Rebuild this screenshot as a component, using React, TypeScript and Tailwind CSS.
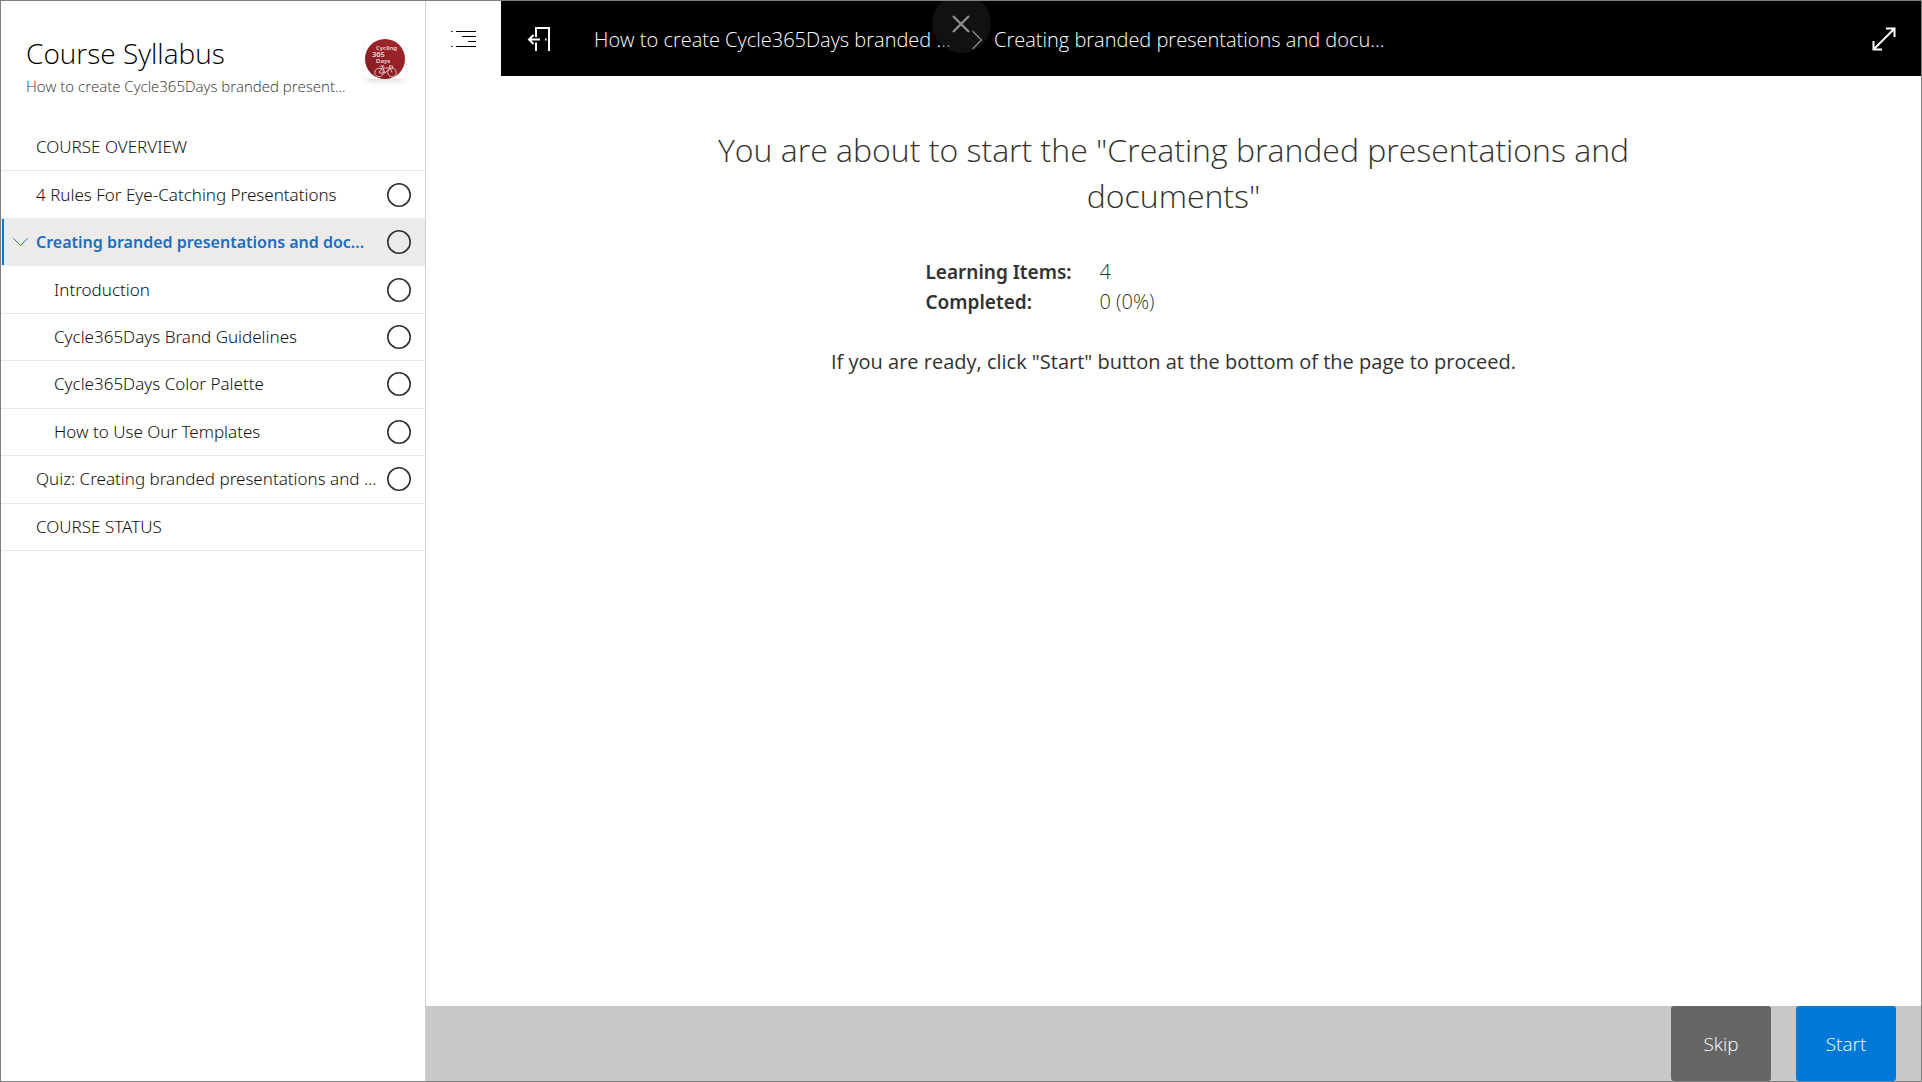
import { useState } from "react";

const items = [
  { title: "COURSE OVERVIEW", kind: "section" },
  { title: "4 Rules For Eye-Catching Presentations", kind: "item" },
  { title: "Creating branded presentations and doc...", kind: "active" },
  { title: "Introduction", kind: "child" },
  { title: "Cycle365Days Brand Guidelines", kind: "child" },
  { title: "Cycle365Days Color Palette", kind: "child" },
  { title: "How to Use Our Templates", kind: "child" },
  { title: "Quiz: Creating branded presentations and ...", kind: "item" },
  { title: "COURSE STATUS", kind: "section" },
];

const CourseLogo = () => (
  <svg viewBox="0 0 40 40" className="size-10 shrink-0 rounded bg-white shadow-md" role="img" aria-label="Cycling 365 Days">
    <defs>
      <linearGradient id="badge" x1="1" y1="0" x2="0.3" y2="1">
        <stop offset="0" stopColor="#a4262c" />
        <stop offset="1" stopColor="#861c22" />
      </linearGradient>
    </defs>
    <circle cx="20" cy="20" r="20" fill="url(#badge)" />
    <g fill="#f3dcdd" fontFamily="Noto Sans, sans-serif" fontWeight="600">
      <text x="11" y="10.500" fontSize="6">Cycling</text>
      <text x="7" y="17.500" fontSize="7.500">365</text>
      <text x="11" y="24" fontSize="6">Days</text>
    </g>
    <g fill="none" stroke="#ecd0d1" strokeWidth="0.9">
      <circle cx="14" cy="33.500" r="4.300" />
      <circle cx="27" cy="33.500" r="4.300" />
      <path d="M14 33.500l3-4.500h8l-5 5h-6M17 27l3 7M24.500 27l2.500 6.500M24 27h3.500v2M15 27h4" />
    </g>
  </svg>
);

const ProgressCircle = () => (
  <svg viewBox="0 0 24 24" className="ml-auto mr-3.5 size-6 shrink-0" fill="none" stroke="#323130" strokeWidth="1.6">
    <circle cx="12" cy="12" r="11.200" />
  </svg>
);

const SyllabusRow = ({ title, kind }: { title: string; kind: string }) => {
  if (kind === "active") {
    return (
      <li className="flex border-b border-[#edebe9] bg-[#edebe9] pl-px">
        <button className="flex w-full items-center border-l-2 border-[#0078d4] text-left" aria-expanded="true">
          <svg viewBox="0 0 16 10" className="mx-2 h-2.5 w-4" fill="none" stroke="#2b6fc4" strokeWidth="1">
            <path d="M1.500 1.500l7 7 7-7" />
          </svg>
          <span className="truncate text-[16px] font-semibold text-[#1b6ec2]">{title}</span>
          <ProgressCircle />
        </button>
      </li>
    );
  }
  return (
    <li className="flex border-b border-[#eaeaea]">
      <button className={`flex w-full items-center text-left ${kind === "child" ? "pl-[53px]" : "pl-[35px]"}`}>
        <span className="whitespace-nowrap">{title}</span>
        {kind !== "section" && <ProgressCircle />}
      </button>
    </li>
  );
};

const Sidebar = () => (
  <aside className="flex w-[425px] shrink-0 flex-col border-r border-[#d2d0ce]">
    <div className="flex justify-between pb-6 pl-[25px] pr-5 pt-[33px]">
      <div className="font-['Open_Sans',sans-serif] font-light">
        <h1 className="text-[28px] leading-[38px] text-black">Course Syllabus</h1>
        <p className="text-[15px] leading-7 text-[#323130]">How to create Cycle365Days branded present...</p>
      </div>
      <div className="pt-[5px]">
        <CourseLogo />
      </div>
    </div>
    <ul className="grid min-h-[427px] auto-rows-fr text-[17px] font-light leading-6 text-[#111]">
      {items.map((item) => (
        <SyllabusRow key={item.title} {...item} />
      ))}
    </ul>
  </aside>
);

const TopBar = ({ onToggle }: { onToggle: () => void }) => (
  <header className="flex h-[75px] shrink-0">
    <button className="flex w-[75px] shrink-0 items-center justify-center" aria-label="Toggle syllabus" onClick={onToggle}>
      <svg viewBox="0 0 26 18" className="h-[18px] w-[26px]" stroke="#000" strokeWidth="1.200">
        <path d="M0 1.500h1.500M5 1.500h20M11 6.500h14M17 11.500h8M0 16.500h1.500M5 16.500h20" />
      </svg>
    </button>
    <nav className="flex min-w-0 grow items-center bg-black font-['Open_Sans',sans-serif] text-[20px] font-light text-white">
      <button className="flex w-[75px] shrink-0 items-center justify-center" aria-label="Exit course">
        <svg viewBox="0 0 24 26" className="h-[26px] w-6" fill="none" stroke="#fff" strokeWidth="2">
          <path d="M9 11V2h13v23M9 16.500V25M1.500 13.500H13M6.500 9L2 13.500 6.500 18M18 13.500h1.500" />
        </svg>
      </button>
      <a href="#course" className="ml-[18px] w-[366px] truncate pt-0.5">How to create Cycle365Days branded ...</a>
      <svg viewBox="0 0 12 20" className="mx-[11px] h-5 w-3 shrink-0" fill="none" stroke="#fff" strokeWidth="1.200">
        <path d="M1.500 2l9 9-9 9" />
      </svg>
      <a href="#lesson" className="whitespace-nowrap pt-0.5">Creating branded presentations and docu...</a>
      <button className="ml-auto mr-[25px] shrink-0" aria-label="Full screen">
        <svg viewBox="0 0 24 24" className="size-6" fill="none" stroke="#fff" strokeWidth="2">
          <path d="M1.500 22.500L22 2M14 1.500h8.500V10M1.500 14v8.500H10" />
        </svg>
      </button>
    </nav>
  </header>
);

const Stats = () => (
  <dl className="mt-[38px] grid w-[496px] grid-cols-[174px_1fr] leading-[30px]">
    <dt className="text-[19px] font-semibold">Learning Items:</dt>
    <dd className="font-['Open_Sans',sans-serif] text-[20px] font-light">4</dd>
    <dt className="text-[19px] font-semibold">Completed:</dt>
    <dd className="font-['Open_Sans',sans-serif] text-[20px] font-light">0 (0%)</dd>
  </dl>
);

const App = () => {
  const [open, setOpen] = useState(true);
  const [closed, setClosed] = useState(false);

  return (
    <div className="relative flex min-h-screen border border-[#808080] bg-white font-['Noto_Sans',sans-serif] text-[#323130]">
      {open && <Sidebar />}
      <div className="flex min-w-0 grow flex-col">
        <TopBar onToggle={() => setOpen(!open)} />
        <main className="flex grow flex-col items-center px-8 pt-[51px]">
          <h2 className="max-w-[1000px] text-center font-['Open_Sans',sans-serif] text-[32px] font-light leading-[46px]">
            You are about to start the "Creating branded presentations and documents"
          </h2>
          <Stats />
          <p className="mt-[30px] font-['Open_Sans',sans-serif] text-[20px] leading-[30px]">
            If you are ready, click "Start" button at the bottom of the page to proceed.
          </p>
        </main>
        <footer className="flex h-[75px] shrink-0 justify-end gap-[25px] bg-[#c8c8c8] pr-[25px] font-['Open_Sans',sans-serif] text-[19px] font-light text-white">
          <button className="w-[100px] rounded-[3px] bg-[#666] pt-0.5">Skip</button>
          <button className="w-[100px] rounded-[3px] bg-[#0078d7] pt-0.5">Start</button>
        </footer>
      </div>
      {!closed && (
        <div className="pointer-events-none absolute inset-x-0 top-0 flex h-[52px] items-end justify-center overflow-hidden">
          <button
            className="pointer-events-auto flex size-[59px] shrink-0 items-center justify-center rounded-full bg-[#202124]/50"
            aria-label="Close"
            onClick={() => setClosed(true)}
          >
            <svg viewBox="0 0 18 18" className="size-[18px]" stroke="#8c8c8c" strokeWidth="2.400">
              <path d="M1 1l16 16M17 1L1 17" />
            </svg>
          </button>
        </div>
      )}
    </div>
  );
};

export default App;
